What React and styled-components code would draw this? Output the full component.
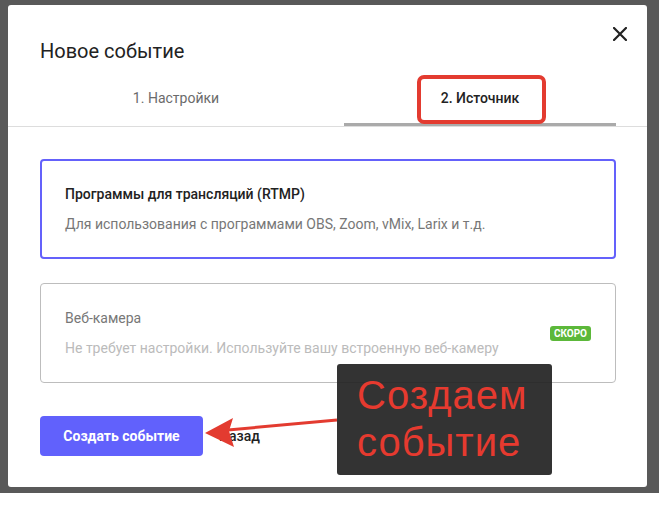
import styled, { createGlobalStyle } from 'styled-components';

const GlobalStyle = createGlobalStyle`
    * {
        box-sizing: border-box;
    }
    body {
        margin: 0;
        background: #fff;
        font-family: Roboto, 'Noto Sans', sans-serif;
    }
`;

const Backdrop = styled.div`
    width: 659px;
    height: 493px;
    background-color: #595959;
    padding: 5px 12px 6px 8px;
`;

const Modal = styled.div`
    position: relative;
    width: 639px;
    height: 482px;
    background-color: #fff;
    border-radius: 3px;
    padding: 32px 31px 0 32px;
`;

const Title = styled.h2`
    margin: 0;
    font-size: 20px;
    line-height: 28px;
    font-weight: 400;
    color: #222;
`;

const CloseButton = styled.button`
    position: absolute;
    top: 22px;
    right: 20px;
    width: 14px;
    height: 14px;
    padding: 0;
    border: none;
    background: none;
    display: flex;
`;

const Tabs = styled.div`
    display: grid;
    grid-template-columns: 272px 272px;
    gap: 32px;
`;

const Tab = styled.div`
    position: relative;
    padding: 23px 0 15px;
    text-align: center;
    font-size: 14px;
    line-height: 20px;
    font-weight: ${(props) => (props.active ? 500 : 400)};
    color: ${(props) => (props.active ? '#222' : '#6b6b6b')};
    border-bottom: 3px solid
        ${(props) => (props.active ? '#aaa' : 'transparent')};
`;

const Highlight = styled.div`
    position: absolute;
    left: 73px;
    top: 10px;
    width: 129px;
    height: 49px;
    border: 4px solid #e33b30;
    border-radius: 7px;
`;

const Divider = styled.div`
    height: 1px;
    margin: 0 -31px 0 -32px;
    background-color: #ddd;
`;

const Options = styled.div`
    display: flex;
    flex-direction: column;
    gap: 24px;
    padding-top: 32px;
`;

const Card = styled.div`
    display: flex;
    align-items: center;
    justify-content: space-between;
    height: 100px;
    padding: 0 ${(props) => 25 - props.border}px 0
        ${(props) => 25 - props.border}px;
    border: ${(props) => props.border}px solid
        ${(props) => (props.selected ? '#6461fb' : '#bdbdbd')};
    border-radius: 4px;
`;

const CardText = styled.div`
    display: flex;
    flex-direction: column;
    gap: 10px;
`;

const CardTitle = styled.div`
    font-size: 14px;
    line-height: 20px;
    font-weight: ${(props) => (props.disabled ? 400 : 500)};
    color: ${(props) => (props.disabled ? '#777' : '#222')};
`;

const CardDesc = styled.div`
    font-size: 14px;
    line-height: 20px;
    color: ${(props) => (props.disabled ? '#bbb' : '#777')};
`;

const Badge = styled.span`
    background-color: #5cb83a;
    color: #fff;
    font-size: 10px;
    font-weight: 700;
    line-height: 15px;
    padding: 0 4px;
    border-radius: 3px;
`;

const Footer = styled.div`
    display: flex;
    align-items: center;
    gap: 16px;
    padding-top: 33px;
`;

const PrimaryButton = styled.button`
    width: 163px;
    height: 40px;
    border: none;
    border-radius: 4px;
    background-color: #6161fc;
    color: #fff;
    font-family: Roboto, sans-serif;
    font-size: 14px;
    font-weight: 700;
`;

const BackButton = styled.button`
    padding: 0;
    border: none;
    background: none;
    font-family: Roboto, sans-serif;
    font-size: 14px;
    font-weight: 500;
    color: #222;
`;

const Note = styled.div`
    position: absolute;
    left: 329px;
    top: 359px;
    width: 215px;
    height: 111px;
    padding: 8px 0 0 20px;
    background-color: rgba(34, 34, 34, 0.92);
    border-radius: 3px;
    font-family: 'Liberation Sans', Arial, sans-serif;
    font-size: 40px;
    line-height: 47px;
    letter-spacing: 1px;
    color: #e63a2f;
`;

const Arrow = styled.svg`
    position: absolute;
    left: 190px;
    top: 405px;
    overflow: visible;
`;

const App = () => {
    return (
        <>
            <GlobalStyle />
            <Backdrop>
                <Modal>
                    <Title>Новое событие</Title>
                    <CloseButton aria-label='Закрыть'>
                        <svg width='14' height='14' viewBox='0 0 14 14'>
                            <path
                                d='M1 1 L13 13 M13 1 L1 13'
                                stroke='#222'
                                strokeWidth='2.2'
                                strokeLinecap='square'
                            />
                        </svg>
                    </CloseButton>
                    <Tabs>
                        <Tab>1. Настройки</Tab>
                        <Tab active>
                            2. Источник
                            <Highlight />
                        </Tab>
                    </Tabs>
                    <Divider />
                    <Options>
                        <Card selected border={2}>
                            <CardText>
                                <CardTitle>
                                    Программы для трансляций (RTMP)
                                </CardTitle>
                                <CardDesc>
                                    Для использования с программами OBS,
                                    Zoom, vMix, Larix и т.д.
                                </CardDesc>
                            </CardText>
                        </Card>
                        <Card border={1}>
                            <CardText>
                                <CardTitle disabled>Веб-камера</CardTitle>
                                <CardDesc disabled>
                                    Не требует настройки. Используйте вашу
                                    встроенную веб-камеру
                                </CardDesc>
                            </CardText>
                            <Badge>СКОРО</Badge>
                        </Card>
                    </Options>
                    <Footer>
                        <PrimaryButton>Создать событие</PrimaryButton>
                        <BackButton>Назад</BackButton>
                    </Footer>
                    <Arrow width='150' height='40' viewBox='0 0 150 40'>
                        <path d='M139 10 L30 20' stroke='#e33b30' strokeWidth='3' />
                        <path d='M7 23 L35 8 L31 21 L36 37 Z' fill='#e33b30' />
                    </Arrow>
                    <Note>
                        Создаем
                        <br />
                        событие
                    </Note>
                </Modal>
            </Backdrop>
        </>
    );
};

export default App;
